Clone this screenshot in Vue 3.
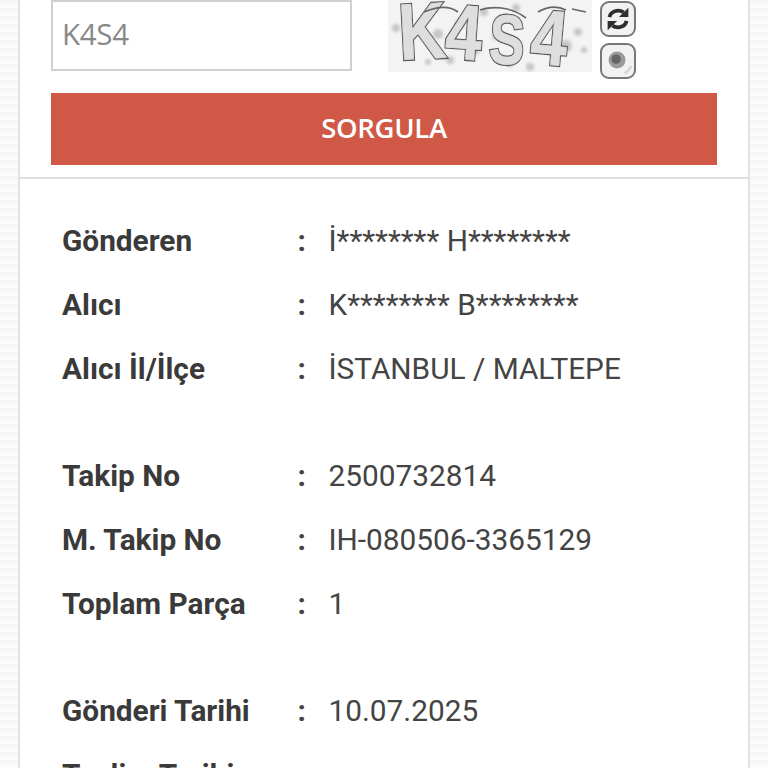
<script setup>
const groups = [
  [
    { label: 'Gönderen', value: 'İ******** H********' },
    { label: 'Alıcı', value: 'K******** B********' },
    { label: 'Alıcı İl/İlçe', value: 'İSTANBUL / MALTEPE' },
  ],
  [
    { label: 'Takip No', value: '2500732814' },
    { label: 'M. Takip No', value: 'IH-080506-3365129' },
    { label: 'Toplam Parça', value: '1' },
  ],
  [
    { label: 'Gönderi Tarihi', value: '10.07.2025' },
    { label: 'Teslim Tarihi', value: '' },
  ],
]
const dots = [
  [8, 28, 4], [22, 52, 3], [62, 60, 4], [50, 34, 5], [96, 12, 4], [122, 64, 3], [146, 50, 3], [168, 22, 5], [178, 46, 6], [190, 32, 4], [72, 24, 5], [108, 36, 4], [142, 67, 4], [40, 62, 3], [196, 50, 3], [88, 52, 3], [128, 8, 4],
]
const glyphs = [
  { ch: 'K', x: 12, y: 60, rot: -3, size: 80, sx: 0.82 },
  { ch: '4', x: 56, y: 58, rot: 4, size: 78, sx: 0.84 },
  { ch: 'S', x: 100, y: 63, rot: 3, size: 70, sx: 0.76 },
  { ch: '4', x: 141, y: 63, rot: 5, size: 78, sx: 0.84 },
]
const place = (g) => `translate(${g.x} ${g.y}) rotate(${g.rot}) scale(${g.sx} 1)`
</script>

<template>
  <div class="page">
    <div class="card">
      <section class="form">
        <div class="captcha-row">
          <input class="code" type="text" value="K4S4" />
          <svg class="captcha" viewBox="0 0 204 72" width="204" height="72" role="img" aria-label="K4S4">
            <defs>
              <filter id="soft" x="-10%" y="-10%" width="120%" height="120%">
                <feGaussianBlur stdDeviation="0.7" />
              </filter>
              <filter id="softer" x="-20%" y="-20%" width="140%" height="140%">
                <feGaussianBlur stdDeviation="1.4" />
              </filter>
            </defs>
            <rect width="204" height="72" fill="#f3f3f3" />
            <g filter="url(#softer)">
              <circle v-for="(d, i) in dots" :key="i" :cx="d[0]" :cy="d[1]" :r="d[2]" fill="#c6c6c6" />
            </g>
            <g filter="url(#soft)">
              <g v-for="(g, i) in glyphs" :key="i" :transform="place(g)">
                <text class="glyph outer" :font-size="g.size">{{ g.ch }}</text>
                <text class="glyph inner" :font-size="g.size">{{ g.ch }}</text>
              </g>
              <path d="M36 12c14-6 26-6 34 0M92 10c12-4 30-4 46 8M150 12c10-6 20-6 28-2M184 9l14 3" fill="none" stroke="#666" stroke-width="1.6" />
            </g>
          </svg>
          <div class="captcha-tools">
            <button class="tool" aria-label="Yenile">
              <svg class="tool-icon" viewBox="0 0 34 34" width="32" height="32">
                <path d="M8 15c1-6 9-9 15-5" fill="none" stroke="#2e2e2e" stroke-width="4" />
                <path d="M28 5v10h-10z" fill="#2e2e2e" />
                <path d="M26 19c-1 6-9 9-15 5" fill="none" stroke="#2e2e2e" stroke-width="4" />
                <path d="M6 29V19h10z" fill="#2e2e2e" />
              </svg>
            </button>
            <button class="tool" aria-label="Dinle">
              <svg class="tool-icon" viewBox="0 0 34 34" width="32" height="32">
                <circle cx="16" cy="16" r="9" fill="#9a9a9a" />
                <circle cx="15" cy="15" r="5" fill="#666" />
                <path d="M24 30a14 14 0 0 0 7-8" fill="none" stroke="#d8d8d8" stroke-width="3" />
              </svg>
            </button>
          </div>
        </div>
        <button class="submit">SORGULA</button>
      </section>

      <section class="details">
        <div v-for="(group, g) in groups" :key="g" class="group">
          <div v-for="row in group" :key="row.label" class="row">
            <span class="label">{{ row.label }}</span>
            <span class="colon">:</span>
            <span class="value">{{ row.value }}</span>
          </div>
        </div>
      </section>
    </div>
  </div>
</template>

<style>
html, body { margin: 0; height: 768px; overflow: hidden; }
</style>

<style scoped>
.page {
  height: 768px;
  overflow: hidden;
  padding: 0 18px;
  box-sizing: border-box;
  background: repeating-linear-gradient(180deg, #f6f6f6 0 4px, #fbfbfb 4px 8px);
}
.card {
  background: #fff;
  border-left: 2px solid #e2e2e2;
  border-right: 2px solid #e2e2e2;
  min-height: 900px;
}
.form {
  padding: 0 31px 12px;
  border-bottom: 2px solid #e2dfdf;
}
.captcha-row {
  display: flex;
  align-items: flex-start;
  height: 93px;
}
.code {
  width: 301px;
  height: 71px;
  box-sizing: border-box;
  border: 2px solid #d0d0d0;
  padding: 0 9px 5px;
  margin: 0;
  font: 29.5px "Open Sans", sans-serif;
  letter-spacing: -0.3px;
  color: #888;
  background: #fff;
  outline: none;
}
.captcha {
  margin-left: 36px;
  flex: none;
}
.glyph {
  font-family: "Liberation Sans", sans-serif;
  font-weight: 700;
}
.outer {
  fill: #666;
  stroke: #5a5a5a;
  stroke-width: 3;
}
.inner {
  fill: #dedede;
  stroke: #dedede;
  stroke-width: 0.6;
}
.captcha-tools {
  display: flex;
  flex-direction: column;
  gap: 6px;
  margin-left: 8px;
  padding-top: 1px;
}
.tool {
  width: 36px;
  height: 36px;
  padding: 0;
  border: 2px solid #777;
  border-radius: 9px;
  background: #f2f2f2;
  display: flex;
  align-items: center;
  justify-content: center;
  overflow: hidden;
}
.tool-icon {
  filter: blur(0.7px);
}
.submit {
  display: block;
  width: 100%;
  height: 72px;
  border: 0;
  padding: 0 0 3px;
  background: #cf5946;
  color: #fff;
  font: 600 27.5px "Open Sans", sans-serif;
  letter-spacing: -0.3px;
}
.details {
  padding: 30px 0 0 42px;
  font-family: Roboto, sans-serif;
  font-size: 29.8px;
  color: #444;
}
.group {
  margin-bottom: 43px;
}
.row {
  display: flex;
  height: 64px;
  line-height: 64px;
}
.label {
  width: 235.5px;
  font-weight: 700;
  color: #3a3a3a;
}
.colon {
  width: 31px;
  font-weight: 700;
}
.value {
  flex: 1;
}
</style>
